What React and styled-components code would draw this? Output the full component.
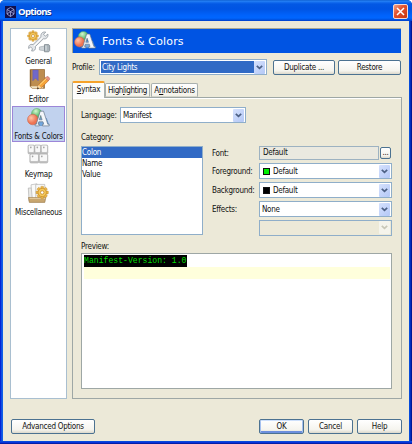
import React from "react";
import styled, { createGlobalStyle, css } from "styled-components";

const Global = createGlobalStyle`
  * { box-sizing: border-box; }
  body { margin: 0; background: #fff; overflow: hidden; }
  svg { display: block; flex: none; }
`;

const Window = styled.div`
  width: 412px;
  height: 444px;
  display: flex;
  flex-direction: column;
  border-radius: 5px 5px 0 0;
  overflow: hidden;
  background: linear-gradient(90deg, #0019cf 0, #0831d9 1px, #166aee 2px, #0855dd 3px, #0855dd 409px, #0441d8 410px, #001da0 411px, #00138c 412px);
  font-family: "DejaVu Sans Condensed", "DejaVu Sans", sans-serif;
  font-stretch: condensed;
  font-size: 8px;
  line-height: 11px;
  letter-spacing: -0.26px;
  color: #111;
  white-space: nowrap;
`;

const TitleBar = styled.header`
  height: 21px;
  flex: none;
  display: flex;
  align-items: center;
  padding: 2px 4px 0 5px;
  background: linear-gradient(#0453c8 0, #2a85f5 1px, #1670f0 2px, #0358e4 4px, #0054e3 9px, #0062fb 15px, #0066ff 18px, #0050dc 20px, #003dcb 21px);
`;

const Title = styled.h1`
  margin: 1px auto 0 2px;
  font: bold 9.6px/12px "Open Sans", sans-serif;
  font-stretch: normal;
  letter-spacing: -0.7px;
  color: #fff;
  text-shadow: 1px 1px 0 #0a2f8c;
`;

const Close = styled.button`
  width: 15px;
  height: 15px;
  padding: 0;
  display: grid;
  place-items: center;
  border: 1px solid #f5d8d2;
  border-radius: 2px;
  background: linear-gradient(135deg, #f0a38b, #e3532f 40%, #c8350e);
`;

const Client = styled.main`
  flex: 1;
  min-height: 0;
  margin: 0 3px;
  background: #ece9d8;
  padding: 7px 7px 0;
  display: flex;
  flex-direction: column;
`;

const BottomEdge = styled.div`
  height: 3px;
  flex: none;
  background: linear-gradient(#0855dd, #0831d9 50%, #00138c);
`;

const Body = styled.div`
  display: flex;
  gap: 5px;
  height: 371px;
`;

const Sidebar = styled.nav`
  width: 57px;
  border: 1px solid #a9bfd0;
  background: #fff;
  padding: 1px;
`;

const Category = styled.div`
  height: ${(p) => p.$h || 38}px;
  display: flex;
  flex-direction: column;
  align-items: center;
  ${(p) =>
    p.$selected &&
    css`
      background: #c1d2ee;
      box-shadow: inset 0 0 0 1px #9c86d8;
    `}
  svg { margin-top: ${(p) => p.$top || 0}px; }
  span { margin-top: ${(p) => p.$gap || 2}px; }
`;

const Main = styled.section`
  width: 330px;
  display: flex;
  flex-direction: column;
`;

const Banner = styled.div`
  height: 25px;
  flex: none;
  display: flex;
  align-items: center;
  gap: 6px;
  padding-left: 1px;
  margin-right: 1px;
  border-top: 1px solid #a7a693;
  border-left: 1px solid #a7a693;
  background: #0054e3;
  color: #fff;
  font-family: "DejaVu Sans", sans-serif;
  font-stretch: normal;
  font-size: 11px;
  line-height: 14px;
  letter-spacing: 0.14px;
  span { margin-top: 1px; }
`;

const ProfileRow = styled.div`
  height: 16px;
  margin-top: 6px;
  display: flex;
  align-items: center;
`;

const Label = styled.label`
  width: ${(p) => p.$w}px;
  flex: none;
`;

const ComboBox = styled.div`
  width: ${(p) => p.$w}px;
  height: 16px;
  flex: none;
  display: flex;
  align-items: center;
  padding: 1px;
  border: 1px solid #8faec9;
  background: ${(p) => (p.$disabled ? "#ece9d8" : "#fff")};
  margin-right: ${(p) => p.$mr || 0}px;
`;

const ComboValue = styled.span`
  flex: 1;
  height: 12px;
  display: flex;
  align-items: center;
  gap: 3px;
  padding-left: ${(p) => p.$pad || 1}px;
  ${(p) => p.$active && css`background: #316ac5; color: #fff;`}
`;

const Arrow = styled.span`
  width: 11px;
  height: 13px;
  display: grid;
  place-items: center;
  border-radius: 1px;
  background: ${(p) => (p.$disabled ? "#f5f4ec" : "linear-gradient(135deg, #d5e1fd, #b4c8f6)")};
  color: ${(p) => (p.$disabled ? "#c8c7b8" : "#4d6185")};
`;

const Swatch = styled.i`
  width: 7px;
  height: 7px;
  border: 1px solid #111;
  background: ${(p) => p.$color};
`;

const Button = styled.button`
  width: ${(p) => p.$w}px;
  height: ${(p) => p.$h || 15}px;
  flex: none;
  padding: 0;
  font: inherit;
  color: inherit;
  letter-spacing: inherit;
  border: 1px solid #4c7291;
  border-radius: 2px;
  background: linear-gradient(#fff, #f5f4ee 75%, #dcd8cb);
  ${(p) => p.$primary && css`box-shadow: inset 0 1px #cee0fb, inset 1px 0 #a5c0ef, inset -1px 0 #a5c0ef, inset 0 -2px #6d8fdd;`}
`;

const MoreButton = styled(Button)`
  display: flex;
  align-items: flex-end;
  justify-content: center;
  line-height: 10px;
`;

const Tabs = styled.div`
  height: 16px;
  margin-top: 6px;
  display: flex;
  align-items: flex-end;
  position: relative;
  z-index: 1;
`;

const Tab = styled.div`
  width: ${(p) => p.$w}px;
  height: 14px;
  margin-right: 1px;
  display: flex;
  align-items: center;
  justify-content: center;
  border: 1px solid #a9b0ae;
  border-bottom-color: #d5d5ca;
  border-radius: 2px 2px 0 0;
  background: linear-gradient(#fff, #f4f2e9);
  u { text-underline-offset: 1px; text-decoration-thickness: 1px; }
  ${(p) => p.$tight && css`letter-spacing: -0.4px;`}
  ${(p) =>
    p.$active &&
    css`
      height: 17px;
      margin: 0 0 -1px;
      border-top: 2px solid #f5a22c;
      border-bottom: 0;
      padding-bottom: 2px;
      background: #fcfcfa;
    `}
`;

const Panel = styled.div`
  flex: 1;
  min-height: 0;
  border: 1px solid #9ea7a5;
  box-shadow: inset 0 1px #fff;
  padding: 9px 8px 0;
`;

const Row = styled.div`
  display: flex;
  align-items: center;
  height: ${(p) => p.$h || 16}px;
`;

const Caption = styled.div`
  height: 11px;
  margin-top: ${(p) => p.$mt}px;
`;

const Settings = styled.div`
  display: flex;
  gap: 9px;
  margin-top: 3px;
  height: 89px;
`;

const List = styled.div`
  width: 122px;
  border: 1px solid #8faec9;
  background: #fff;
`;

const ListRow = styled.div`
  height: 11px;
  line-height: 11px;
  ${(p) => p.$selected && css`background: #316ac5; color: #fff;`}
`;

const Properties = styled.div`
  display: flex;
  flex-direction: column;
  gap: 3px;
`;

const FontField = styled.div`
  width: 120px;
  height: 14px;
  margin-right: 1px;
  padding-left: 3px;
  line-height: 12px;
  border: 1px solid #9db2c1;
  background: #eae9e0;
`;

const Preview = styled.div`
  height: 136px;
  margin-top: 1px;
  width: 311px;
  border: 1px solid #9ea7a5;
  background: #fff;
  padding: 1px 1px 0 2px;
`;

const Code = styled.div`
  width: 103px;
  height: 12px;
  background: #000;
  color: #00df00;
  font: 8.15px/12px "Liberation Mono", monospace;
  font-stretch: normal;
  letter-spacing: 0;
`;

const CaretLine = styled.div`
  height: 12px;
  background: #ffffdc;
`;

const Footer = styled.footer`
  display: flex;
  gap: 4px;
  margin: 20px 0 0 1px;
  button:first-child { margin-right: auto; }
`;

const Chevron = () => (
  <svg width="7" height="5" viewBox="0 0 7 5">
    <path d="M.8 .8 3.5 3.4 6.2 .8" fill="none" stroke="currentColor" strokeWidth="1.7" />
  </svg>
);

const Combo = ({ w, value, swatch, active, disabled, pad, mr }) => (
  <ComboBox $w={w} $disabled={disabled} $mr={mr}>
    <ComboValue $active={active} $pad={pad}>
      {swatch && <Swatch $color={swatch} />}
      {value}
    </ComboValue>
    <Arrow $disabled={disabled}><Chevron /></Arrow>
  </ComboBox>
);

const AppIcon = () => (
  <svg width="11" height="12" viewBox="0 0 11 12">
    <rect width="11" height="12" fill="#10104e" />
    <path d="M2 3.5 5.5 1.5 9 3.5V8L5.5 10.5 2 8ZM2 3.5l3.5 2L9 3.5M5.5 5.5v5M2 8l3.5-2.5L9 8" fill="none" stroke="#a9afe0" strokeWidth=".8" />
  </svg>
);

const teeth = [0, 45, 90, 135, 180, 225, 270, 315];

const Gear = ({ x, y, s = 1 }) => (
  <g transform={`translate(${x} ${y}) scale(${s})`}>
    {teeth.map((a) => (
      <rect key={a} x="-1.2" y="-5.3" width="2.4" height="3" rx=".4" fill="#ecb647" stroke="#c08a2c" strokeWidth=".4" transform={`rotate(${a})`} />
    ))}
    <circle r="3.6" fill="#f5c95c" stroke="#c58a25" strokeWidth=".6" />
    <circle r="1.5" fill="#fff" stroke="#b97b1c" strokeWidth=".6" />
  </g>
);

const GeneralIcon = () => (
  <svg width="24" height="24" viewBox="0 0 24 24">
    <Gear x={6} y={6} />
    <path d="M18.8 2.2c-2.7-1-5.5 1.3-4.8 4.5L6 14.6c-2.8-.9-4.8 1-4.4 3.8l2.1-1.3 1.8 1.6-.9 2.3c2.7.5 4.5-1.7 3.8-4.4l8-7.8c3 .6 5-1.8 4.5-4.7l-2.5 2-2-1.8Z" fill="#e4e7ea" stroke="#8f979e" strokeWidth=".8" />
    <path d="m7 16 8.5-8.3" stroke="#fff" strokeWidth="1" />
    <path d="m12.4 17 5.1-1v4.8l-5.1-.8Z" fill="#cfd5d9" stroke="#9aa3a9" strokeWidth=".6" />
    <path d="M17.5 14.6h4.2l1 1.2v4.8l-1 1.2h-4.2Z" fill="#aab4ba" stroke="#727d84" strokeWidth=".7" />
    <path d="M19 15.5v5" stroke="#e4e9ec" strokeWidth="1" />
  </svg>
);

const EditorIcon = () => (
  <svg width="24" height="24" viewBox="0 0 24 24">
    <path d="M3.2 1.5h14.3v18.8H5.3L3.2 18.5Z" fill="#bd8d50" stroke="#9a713e" strokeWidth=".8" />
    <path d="M3.6 18.2h12.2v2.1H5.3Z" fill="#f1e3c4" />
    <path d="M3.6 2v16" stroke="#8b6233" strokeWidth="1.2" />
    <path d="M5.8 2h5.4v10.8L8.5 10l-2.7 2.8Z" fill="#7168c9" stroke="#625bb2" strokeWidth=".5" />
    <path d="m10.2 21 1.3-4.2 7.3-7.2 3 2.8-7.4 7.3Z" fill="#f6a43a" stroke="#ba6820" strokeWidth=".6" />
    <path d="m18.4 10 1.4-1.4c1-.8 3.6 1.5 2.8 2.8l-1.4 1.5Z" fill="#e99183" stroke="#b36959" strokeWidth=".5" />
    <path d="m12.5 17 7-6.7" stroke="#ffe28b" strokeWidth="1" />
    <path d="m10 21.3 1.5-4.2 2.8 2.7Z" fill="#f5d8a5" />
    <path d="m10 21.3.7-2 1.4 1.2Z" fill="#222" />
  </svg>
);

const ColorsIcon = ({ size = 23 }) => (
  <svg width={size} height={size * 20 / 23} viewBox="0 0 23 20">
    <defs>
      <radialGradient id="green" cx=".4" cy=".25"><stop stopColor="#d7f7cf" /><stop offset="1" stopColor="#55b969" /></radialGradient>
      <radialGradient id="red" cx=".35" cy=".35"><stop stopColor="#ffc4a8" /><stop offset="1" stopColor="#ee7353" /></radialGradient>
    </defs>
    <path d="M7.5 10.5h12L22 17.5H9Z" fill="#72a7df" stroke="#477fba" strokeWidth=".5" />
    <circle cx="9.8" cy="5.8" r="5.3" fill="url(#green)" stroke="#55a968" strokeWidth=".5" />
    <circle cx="5.8" cy="11.5" r="5.3" fill="url(#red)" stroke="#cb6046" strokeWidth=".5" />
    <path d="M13.2 3.2h3.3l4.3 13h1.4v1.7h-6.7v-1.7h1.2l-.7-2.4h-4.2l-.8 2.4h1.3v1.7H8.1v-1.7h1.2ZM13.7 7.5l-1.4 4.3h2.8Z" fill="#f4f6fa" stroke="#66778d" strokeWidth=".7" fillRule="evenodd" />
  </svg>
);

const keys = [[1, 1, 6.5], [7.5, 1, 6.5], [14, 1, 6.8], [2.8, 10, 9], [12, 10, 8.8]];

const KeymapIcon = () => (
  <svg width="23" height="21" viewBox="0 0 23 21">
    {keys.map(([x, y, w]) => (
      <g key={`${x}-${y}`}>
        <rect x={x} y={y} width={w} height="9" rx="1.3" fill="#c3c3c3" stroke="#aaa" strokeWidth=".6" />
        <rect x={x + 0.8} y={y + 0.5} width={w - 1.6} height="6.6" rx=".8" fill="#f8f8f8" />
        <path d={`M${x + 2} ${y + 2.3}h1.6M${x + 2.8} ${y + 1.6}v1.8`} stroke="#888" strokeWidth=".6" />
      </g>
    ))}
  </svg>
);

const MiscIcon = () => (
  <svg width="23" height="22" viewBox="0 0 23 22">
    <path d="M1.3 6h4l1.2 13H2Z" fill="#e9e9e6" stroke="#aaa" strokeWidth=".6" />
    <path d="m4 2.8 6-1 2 15H5.3Z" fill="#fafaf8" stroke="#aaa" strokeWidth=".6" />
    <path d="M8.7 2.4h9l.8 14H8.7Z" fill="#f7f7f5" stroke="#aaa" strokeWidth=".6" />
    <path d="M1.5 15.5h17.3l-1 4.9H2.3Z" fill="#c9a770" stroke="#957646" strokeWidth=".6" />
    <path d="M2.5 16.3h15.8" stroke="#ead4ac" strokeWidth=".9" />
    <Gear x={15.2} y={10.5} s={1.15} />
  </svg>
);

export default function App() {
  return (
    <>
      <Global />
      <Window>
        <TitleBar>
          <AppIcon />
          <Title>Options</Title>
          <Close aria-label="Close">
            <svg width="9" height="9" viewBox="0 0 9 9">
              <path d="m1 1 7 7M8 1 1 8" stroke="#fff" strokeWidth="1.5" />
            </svg>
          </Close>
        </TitleBar>
        <Client>
          <Body>
            <Sidebar>
              <Category $h={38} $gap={2}><GeneralIcon /><span>General</span></Category>
              <Category $h={38} $gap={2}><EditorIcon /><span>Editor</span></Category>
              <Category $h={36} $top={2} $gap={3} $selected><ColorsIcon /><span>Fonts &amp; Colors</span></Category>
              <Category $h={38} $top={2} $gap={4}><KeymapIcon /><span>Keymap</span></Category>
              <Category $h={38} $top={2} $gap={3}><MiscIcon /><span>Miscellaneous</span></Category>
            </Sidebar>
            <Main>
              <Banner><ColorsIcon size={22} /><span>Fonts &amp; Colors</span></Banner>
              <ProfileRow>
                <Label $w={27}>Profile:</Label>
                <Combo w={168} value="City Lights" active mr={6} />
                <Button $w={62}>Duplicate ...</Button>
                <Label $w={3} />
                <Button $w={63}>Restore</Button>
              </ProfileRow>
              <Tabs>
                <Tab $w={33} $active><span><u>S</u>yntax</span></Tab>
                <Tab $w={45} $tight><span>High<u>l</u>ighting</span></Tab>
                <Tab $w={47}><span>A<u>n</u>notations</span></Tab>
              </Tabs>
              <Panel>
                <Row><Label $w={39}>Language:</Label><Combo w={126} value="Manifest" /></Row>
                <Caption $mt={9}>Category:</Caption>
                <Settings>
                  <List>
                    <ListRow $selected>Colon</ListRow>
                    <ListRow>Name</ListRow>
                    <ListRow>Value</ListRow>
                  </List>
                  <Properties>
                    <Row $h={14}><Label $w={47}>Font:</Label><FontField>Default</FontField><MoreButton $w={11} $h={12}>...</MoreButton></Row>
                    <Row><Label $w={47}>Foreground:</Label><Combo w={133} value="Default" swatch="#00f000" pad={2} /></Row>
                    <Row><Label $w={47}>Background:</Label><Combo w={133} value="Default" swatch="#000" pad={2} /></Row>
                    <Row><Label $w={47}>Effects:</Label><Combo w={133} value="None" /></Row>
                    <Row $h={15}><Label $w={47} /><Combo w={133} disabled /></Row>
                  </Properties>
                </Settings>
                <Caption $mt={6}>Preview:</Caption>
                <Preview><Code>Manifest-Version: 1.0</Code><CaretLine /></Preview>
              </Panel>
            </Main>
          </Body>
          <Footer>
            <Button $w={84}>Advanced Options</Button>
            <Button $w={45} $primary>OK</Button>
            <Button $w={45}>Cancel</Button>
            <Button $w={45}>Help</Button>
          </Footer>
        </Client>
        <BottomEdge />
      </Window>
    </>
  );
}
